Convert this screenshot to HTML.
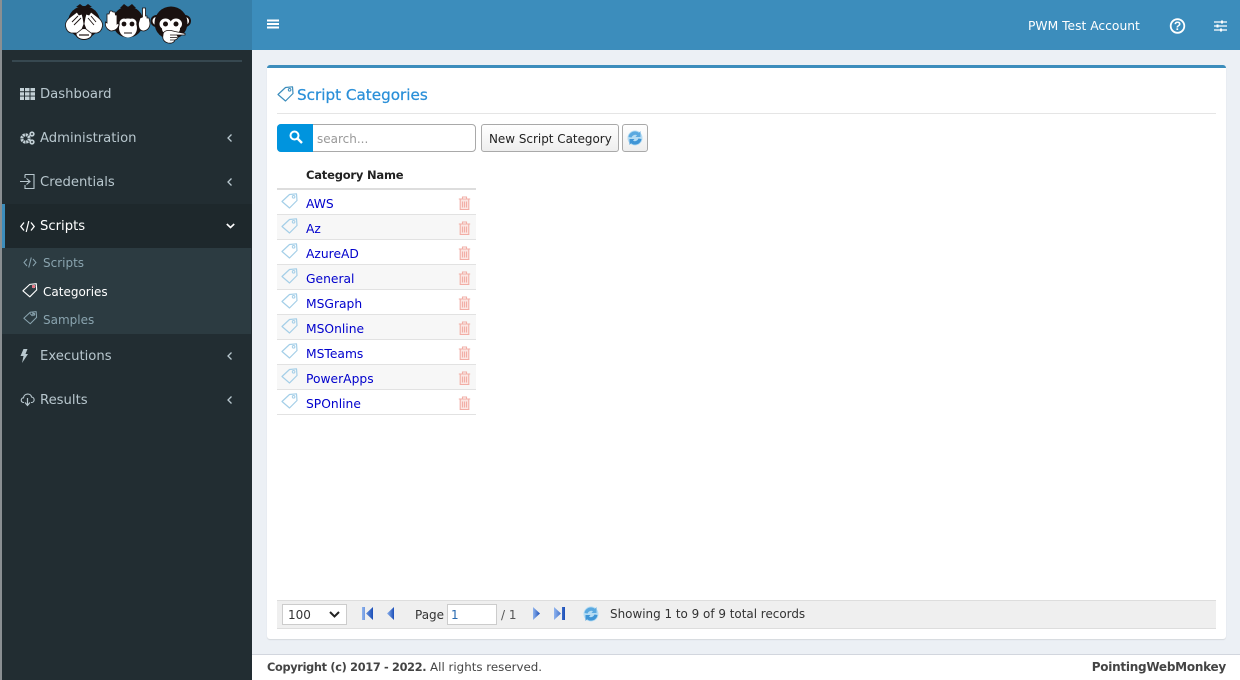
<!DOCTYPE html>
<html><head><meta charset="utf-8"><style>
html,body{margin:0;padding:0;width:1240px;height:680px;overflow:hidden;background:#ecf0f5;font-family:"DejaVu Sans","Liberation Sans",sans-serif;font-size:12.5px}
.a{position:absolute}
.t{position:absolute;white-space:nowrap;line-height:18px}
.nav{color:#b8c7ce;font-size:13.2px}
.sub{color:#8aa4af;font-size:12px}
.row{position:absolute;left:277px;width:199px;height:24px;border-bottom:1px solid #e2e2e2}
.row a{position:absolute;left:29px;top:5px;color:#0000cc;font-size:12.3px;line-height:18px}
svg{position:absolute;overflow:visible}
</style></head><body>
<svg width="0" height="0" style="position:absolute"><defs>
<g id="tag"><path d="M1 8.500 8.500 1.500 15.500 .8 16 7.500 8.500 15Z" fill="none" stroke="currentColor" stroke-width="1.200" stroke-linejoin="round"/><circle cx="12.600" cy="3.800" r="1.300" fill="none" stroke="currentColor"/></g>
<g id="trash"><path d="M2.200 3.500V13.500H10.800V3.500Z" fill="#fbe6e3"/><path d="M.8 3H12.200M4.500 3V1H8.500V3M2.200 3.500V13.500H10.800V3.500M4.500 5.500V11.500M6.500 5.500V11.500M8.500 5.500V11.500" fill="none" stroke="#f2aea6" stroke-width="1.100"/></g>
<g id="chev"><path d="M4.500 .5 1 4 4.500 7.500" fill="none" stroke="#b8c7ce" stroke-width="1.300"/></g>
<linearGradient id="bl" x1="0" x2="1"><stop offset="0" stop-color="#8fb4ee"/><stop offset="1" stop-color="#1c4fb8"/></linearGradient>
<g id="ref"><circle cx="8" cy="8" r="7.500" fill="#b5dcf3"/><path d="M1.500 7A6.500 6.500 0 0 1 12 2.800L13.500 1V7H8.500L10 5.200A4 4 0 0 0 4.500 7.500Z" fill="#5aa9e0"/><path d="M14.500 9A6.500 6.500 0 0 1 4 13.200L2.500 15V9H7.500L6 10.800A4 4 0 0 0 11.500 8.500Z" fill="#3f95d6"/></g>
</defs></svg>

<!-- header -->
<div class="a" style="left:252px;top:0;width:988px;height:50px;background:#3c8dbc"></div>
<div class="a" style="left:0;top:0;width:252px;height:50px;background:#367fa9"></div>
<div class="a" style="left:0;top:0;width:2px;height:680px;background:#8a8f92"></div>

<!-- logo -->
<svg style="left:0;top:0" width="252" height="50">
<!-- monkey 1 -->
<circle cx="84" cy="22" r="16" fill="#1a1110"/>
<path d="M76 7 80 4 84 7 88 4 92 7Z" fill="#1a1110"/>
<ellipse cx="84" cy="34" rx="8" ry="5.500" fill="#fff" stroke="#1a1110"/>
<path d="M79 35H89" stroke="#1a1110" stroke-width="1.200"/>
<path d="M65.500 26C65 21 69 18 73 15L77 12 79 15 82 14 83 18 84 24 82 29 77 33 71 33C67 32 66 29 65.500 26Z" fill="#fff" stroke="#1a1110" stroke-width=".8"/>
<path d="M102.500 26C103 21 99 18 95 15L91 12 89 15 86 14 85 18 84 24 86 29 91 33 97 33C101 32 102 29 102.500 26Z" fill="#fff" stroke="#1a1110" stroke-width=".8"/>
<path d="M72 22 78 16M74 25 81 18M91 16 96 22M88 18 94 25" stroke="#1a1110" stroke-width=".9"/>
<!-- monkey 2 -->
<circle cx="128" cy="22" r="15.500" fill="#1a1110"/>
<path d="M120 8 124 4 128 7 132 4 136 8Z" fill="#1a1110"/>
<ellipse cx="128" cy="28" rx="9" ry="9.500" fill="#fff"/>
<ellipse cx="124" cy="23" rx="4.500" ry="4.500" fill="#fff"/><ellipse cx="132" cy="23" rx="4.500" ry="4.500" fill="#fff"/>
<circle cx="124" cy="24" r="2.400" fill="#1a1110"/><circle cx="132" cy="24" r="2.400" fill="#1a1110"/>
<path d="M124 33H132" stroke="#1a1110" stroke-width="1"/>
<path d="M111 31C106 29 105 26 105.500 22L107 23 107 14 109 14 110 11 112 11 113 12 115 12 115.500 15 117 15 117 24C118 23 119 24 119 25 118 28 116 31 111 31Z" fill="#fff" stroke="#1a1110" stroke-width=".8"/>
<path d="M144 31C148 30 150 27 150 23L149 18 147 18 147 16 145.500 16 145.500 8 142.500 8 142.500 17 140 18 138.500 23C138 28 140 31 144 31Z" fill="#fff" stroke="#1a1110" stroke-width=".8"/>
<!-- monkey 3 -->
<circle cx="156.500" cy="21" r="5" fill="#fff" stroke="#1a1110" stroke-width="2"/>
<circle cx="185" cy="21" r="5" fill="#fff" stroke="#1a1110" stroke-width="2"/>
<circle cx="171" cy="23" r="16.500" fill="#1a1110"/>
<ellipse cx="165.500" cy="24" rx="6" ry="5.500" fill="#fff"/><ellipse cx="176" cy="24" rx="6" ry="5.500" fill="#fff"/>
<ellipse cx="171" cy="29" rx="9" ry="6" fill="#fff"/>
<circle cx="165.500" cy="24" r="2.500" fill="#1a1110"/><circle cx="176" cy="24" r="2.500" fill="#1a1110"/>
<path d="M163 35C163 31 167 30 171 30.500L175 31.500 180 32.500 185 33.500 185 35 177 35 178 37 177 39 175 40C174 43 171 43.500 168 43 164 42 162 39 163 35Z" fill="#fff" stroke="#1a1110" stroke-width=".8"/>
<path d="M170 35H177M170 37.500H177M170 40H175" stroke="#1a1110" stroke-width=".8"/>
</svg>

<!-- sidebar -->
<div class="a" style="left:2px;top:50px;width:250px;height:630px;background:#222d32"></div>
<div class="a" style="left:12px;top:60px;width:230px;height:2px;background:#374850"></div>
<div class="a" style="left:2px;top:204px;width:250px;height:44px;background:#1e282c"></div>
<div class="a" style="left:2px;top:204px;width:3px;height:44px;background:#3c8dbc"></div>
<div class="a" style="left:2px;top:248px;width:249px;height:86px;background:#2c3b41"></div>

<div class="t nav" style="left:40px;top:86px">Dashboard</div>
<div class="t nav" style="left:40px;top:130px">Administration</div>
<div class="t nav" style="left:40px;top:174px">Credentials</div>
<div class="t nav" style="left:40px;top:218px;color:#fff">Scripts</div>
<div class="t sub" style="left:43px;top:254px">Scripts</div>
<div class="t sub" style="left:43px;top:283px;color:#fff">Categories</div>
<div class="t sub" style="left:43px;top:311px">Samples</div>
<div class="t nav" style="left:40px;top:348px">Executions</div>
<div class="t nav" style="left:40px;top:392px">Results</div>

<!-- sidebar icons -->
<svg style="left:20px;top:88px" width="15" height="12"><path d="M0 0h4v3.300H0zM5 0h4.500v3.300H5zM10.500 0H15v3.300h-4.500zM0 4.300h4v3.300H0zM5 4.300h4.500v3.300H5zM10.500 4.300H15v3.300h-4.500zM0 8.500h4V12H0zM5 8.500h4.500V12H5zM10.500 8.500H15V12h-4.500z" fill="#c3d0d6"/></svg>
<svg style="left:20px;top:131px" width="15" height="14"><circle cx="5.500" cy="7.500" r="3.700" fill="none" stroke="#c3d0d6" stroke-width="3" stroke-dasharray="2.200 .7"/><circle cx="12" cy="3" r="1.800" fill="none" stroke="#c3d0d6" stroke-width="1.700"/><circle cx="12" cy="11" r="1.800" fill="none" stroke="#c3d0d6" stroke-width="1.700"/></svg>
<svg style="left:20px;top:174px" width="15" height="15"><path d="M5 .5H14V14.500H5V11M5 4V.5" fill="none" stroke="#b8c7ce" stroke-width="1.100"/><path d="M0 7.500H9M6.500 4.500 10 7.500 6.500 10.500" fill="none" stroke="#b8c7ce" stroke-width="1.100"/></svg>
<svg style="left:20px;top:221px" width="15" height="11"><path d="M4 1.500 .8 5.500 4 9.500M11 1.500 14.200 5.500 11 9.500" fill="none" stroke="#fff" stroke-width="1.300"/><path d="M8.800 0 6.200 11" stroke="#fff" stroke-width="1.200"/></svg>
<svg style="left:23px;top:257px" width="14" height="11"><path d="M4 2 1 5.500 4 9M10 2 13 5.500 10 9M8.300 .5 5.700 10.500" fill="none" stroke="#8aa4af" stroke-width="1"/></svg>
<svg style="left:22px;top:283px;color:#fff" width="15" height="15"><use href="#tag" transform="scale(.92)" /><circle cx="11.500" cy="3.500" r="1.500" fill="#e86a7a"/></svg>
<svg style="left:23px;top:311px;color:#8aa4af" width="15" height="15"><use href="#tag" transform="scale(.85)"/><path d="M7 2.500 9.500 5M9.500 1.500 11.500 4" stroke="#8aa4af"/></svg>
<svg style="left:20px;top:349px" width="8" height="14"><path d="M3.500 0H7.500L5.500 5H8L2 14 3.500 7H.5Z" fill="#b8c7ce"/></svg>
<svg style="left:20px;top:392px" width="15" height="14"><path d="M4 10.500H3.500C.500 10.500.500 6 3.500 5.800 4 1 11 1 11.500 5 15 5.300 15 10.500 11.500 10.500H11" fill="none" stroke="#b8c7ce" stroke-width="1.100"/><path d="M7.500 6V13M5 10.500 7.500 13.500 10 10.500" fill="none" stroke="#b8c7ce" stroke-width="1.200"/></svg>

<svg style="left:227px;top:134px" width="7" height="8"><use href="#chev"/></svg>
<svg style="left:227px;top:178px" width="7" height="8"><use href="#chev"/></svg>
<svg style="left:226px;top:223px" width="9" height="6"><path d="M.8 1 4.500 4.500 8.200 1" fill="none" stroke="#fff" stroke-width="1.600"/></svg>
<svg style="left:227px;top:352px" width="7" height="8"><use href="#chev"/></svg>
<svg style="left:227px;top:396px" width="7" height="8"><use href="#chev"/></svg>

<!-- top right -->
<svg style="left:267px;top:19px" width="12" height="10"><path d="M0 .500h12v2H0zM0 4h12v2H0zM0 7.500h12v2H0z" fill="#fff"/></svg>
<div class="t" style="left:1028px;top:17px;color:#fff;font-size:12.3px">PWM Test Account</div>
<svg style="left:1170px;top:18px" width="16" height="16"><circle cx="7.500" cy="8" r="6.800" fill="none" stroke="#fff" stroke-width="1.800"/><text x="7.500" y="12.200" text-anchor="middle" fill="#fff" font-size="12" font-weight="bold" font-family="Liberation Sans">?</text></svg>
<svg style="left:1214px;top:20px" width="13" height="12"><path d="M0 2h13M0 6h13M0 10h13" stroke="#fff" stroke-width="1.200"/><path d="M7 .5h2v3H7zM2.500 4.500h2v3h-2zM6 8.500h2v3H6z" fill="#fff"/></svg>

<!-- box -->
<div class="a" style="left:267px;top:65px;width:959px;height:574px;background:#fff;border-top:3px solid #3c8dbc;box-sizing:border-box;border-radius:3px;box-shadow:0 1px 1px rgba(0,0,0,.1)"></div>
<svg style="left:277px;top:86px;color:#3c8dbc" width="17" height="17"><use href="#tag"/></svg>
<div class="t" style="left:297px;top:85px;color:#2a8fd8;font-size:15.2px;line-height:20px;-webkit-text-stroke:.25px #2a8fd8">Script Categories</div>
<div class="a" style="left:277px;top:113px;width:939px;height:1px;background:#e5e5e5"></div>

<!-- search -->
<div class="a" style="left:277px;top:124px;width:199px;height:28px;box-sizing:border-box;border:1px solid #a9a9a9;border-radius:4px;background:#fff"></div>
<div class="a" style="left:277px;top:124px;width:36px;height:28px;background:#0094de;border-radius:4px 0 0 4px"></div>
<svg style="left:289px;top:130px" width="14" height="14"><circle cx="5.500" cy="5.500" r="4" fill="none" stroke="#fff" stroke-width="2"/><path d="M8.500 8.500 13 13" stroke="#fff" stroke-width="2.400"/></svg>
<div class="t" style="left:317px;top:130px;color:#999;font-size:12px">search...</div>
<div class="a" style="left:481px;top:124px;width:138px;height:28px;box-sizing:border-box;border:1px solid #a9a9a9;border-radius:3px;background:linear-gradient(#fff,#eee)"></div>
<div class="t" style="left:489px;top:130px;color:#222;font-size:11.95px">New Script Category</div>
<div class="a" style="left:622px;top:124px;width:26px;height:28px;box-sizing:border-box;border:1px solid #a9a9a9;border-radius:3px;background:linear-gradient(#fff,#eee)"></div>
<svg style="left:627px;top:130px" width="16" height="16"><use href="#ref"/></svg>

<!-- table -->
<div class="t" style="left:306px;top:166px;color:#222;font-size:11.5px;letter-spacing:-.2px;font-weight:bold">Category Name</div>
<div class="a" style="left:277px;top:188px;width:199px;height:2px;background:#ddd"></div>

<div class="row" style="top:190px"><a>AWS</a></div>
<div class="row" style="top:215px;background:#f7f7f7"><a>Az</a></div>
<div class="row" style="top:240px"><a>AzureAD</a></div>
<div class="row" style="top:265px;background:#f7f7f7"><a>General</a></div>
<div class="row" style="top:290px"><a>MSGraph</a></div>
<div class="row" style="top:315px;background:#f7f7f7"><a>MSOnline</a></div>
<div class="row" style="top:340px"><a>MSTeams</a></div>
<div class="row" style="top:365px;background:#f7f7f7"><a>PowerApps</a></div>
<div class="row" style="top:390px"><a>SPOnline</a></div>

<svg style="left:281px;top:193px;color:#a5cfe8" width="17" height="17"><use href="#tag"/></svg>
<svg style="left:281px;top:218px;color:#a5cfe8" width="17" height="17"><use href="#tag"/></svg>
<svg style="left:281px;top:243px;color:#a5cfe8" width="17" height="17"><use href="#tag"/></svg>
<svg style="left:281px;top:268px;color:#a5cfe8" width="17" height="17"><use href="#tag"/></svg>
<svg style="left:281px;top:293px;color:#a5cfe8" width="17" height="17"><use href="#tag"/></svg>
<svg style="left:281px;top:318px;color:#a5cfe8" width="17" height="17"><use href="#tag"/></svg>
<svg style="left:281px;top:343px;color:#a5cfe8" width="17" height="17"><use href="#tag"/></svg>
<svg style="left:281px;top:368px;color:#a5cfe8" width="17" height="17"><use href="#tag"/></svg>
<svg style="left:281px;top:393px;color:#a5cfe8" width="17" height="17"><use href="#tag"/></svg>

<svg style="left:457.500px;top:195.500px" width="13" height="14"><use href="#trash"/></svg>
<svg style="left:457.500px;top:220.500px" width="13" height="14"><use href="#trash"/></svg>
<svg style="left:457.500px;top:245.500px" width="13" height="14"><use href="#trash"/></svg>
<svg style="left:457.500px;top:270.500px" width="13" height="14"><use href="#trash"/></svg>
<svg style="left:457.500px;top:295.500px" width="13" height="14"><use href="#trash"/></svg>
<svg style="left:457.500px;top:320.500px" width="13" height="14"><use href="#trash"/></svg>
<svg style="left:457.500px;top:345.500px" width="13" height="14"><use href="#trash"/></svg>
<svg style="left:457.500px;top:370.500px" width="13" height="14"><use href="#trash"/></svg>
<svg style="left:457.500px;top:395.500px" width="13" height="14"><use href="#trash"/></svg>

<!-- pager -->
<div class="a" style="left:277px;top:600px;width:939px;height:29px;box-sizing:border-box;background:#efefef;border-top:1px solid #ddd;border-bottom:1px solid #ddd"></div>
<div class="a" style="left:282px;top:604px;width:65px;height:21px;box-sizing:border-box;background:#fff;border:1px solid #ccc"></div>
<div class="t" style="left:288px;top:606px;color:#333;font-size:12px">100</div>
<svg style="left:329px;top:611px" width="12" height="7"><path d="M1 1 5.500 5.500 10 1" fill="none" stroke="#222" stroke-width="2"/></svg>
<svg style="left:362px;top:607px" width="12" height="14"><path d="M0 0h3v13H0zM11 0V13L4 6.500Z" fill="url(#bl)"/></svg>
<svg style="left:387px;top:607px" width="8" height="14"><path d="M7 0V13L0 6.500Z" fill="url(#bl)"/></svg>
<div class="t" style="left:415px;top:606px;color:#333;font-size:12px">Page</div>
<div class="a" style="left:447px;top:604px;width:50px;height:21px;box-sizing:border-box;background:#fff;border:1px solid #ccc"></div>
<div class="t" style="left:451px;top:606px;color:#2a6ab0;font-size:12px">1</div>
<div class="t" style="left:501px;top:606px;color:#555;font-size:12px">/ 1</div>
<svg style="left:533px;top:607px" width="8" height="14"><path d="M0 0V13L7 6.500Z" fill="url(#bl)"/></svg>
<svg style="left:554px;top:607px" width="12" height="14"><path d="M0 0V13L7 6.500ZM8 0h3v13H8z" fill="url(#bl)"/></svg>
<svg style="left:583px;top:606px" width="16" height="16"><use href="#ref"/></svg>
<div class="t" style="left:610px;top:605px;color:#333;font-size:11.95px">Showing 1 to 9 of 9 total records</div>

<!-- footer -->
<div class="a" style="left:252px;top:654px;width:988px;height:26px;background:#fff;border-top:1px solid #d2d6de;box-sizing:border-box"></div>
<div class="t" style="left:267px;top:658px;color:#444;font-size:11.85px"><b style="font-size:11.3px;letter-spacing:-.3px">Copyright (c) 2017 - 2022.</b> All rights reserved.</div>
<div class="t" style="right:14px;top:658px;color:#444;font-size:12px;letter-spacing:-.25px;font-weight:bold">PointingWebMonkey</div>
</body></html>
